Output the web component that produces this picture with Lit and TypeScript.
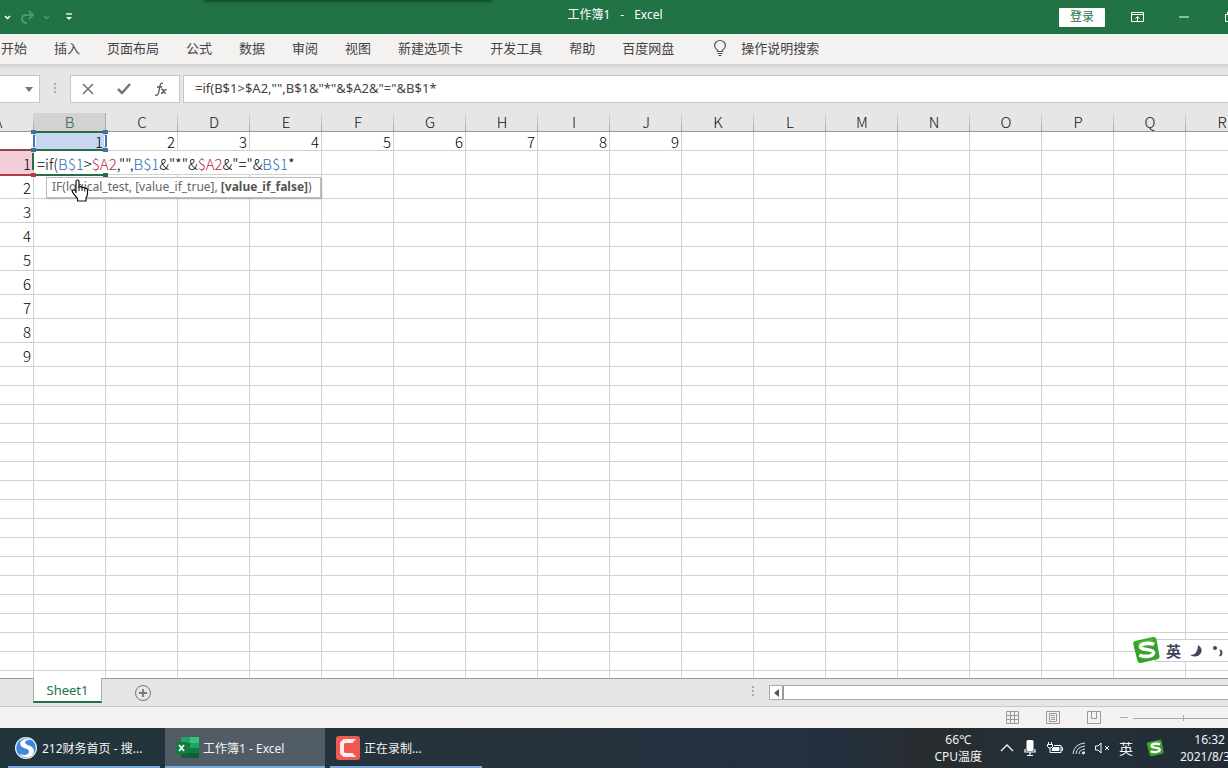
import { LitElement, html, css, svg } from "lit";
import { customElement } from "lit/decorators.js";
import { classMap } from "lit/directives/class-map.js";

const TABS = ["开始", "插入", "页面布局", "公式", "数据", "审阅", "视图", "新建选项卡", "开发工具", "帮助", "百度网盘"];
const COLUMNS = [..."ABCDEFGHIJKLMNOPQR"];
const ROW_COUNT = 27;

const FORMULA: Array<[string, string]> = [
  ["=if(", ""],
  ["B$1", "blue"],
  [">", ""],
  ["$A2", "red"],
  [',"",', ""],
  ["B$1", "blue"],
  ['&"*"&', ""],
  ["$A2", "red"],
  ['&"="&', ""],
  ["B$1", "blue"],
  ["*", ""],
];

const sogouMark = svg`
  <path d="M3 5 21 1q3-.4 3.500 2.200L27.500 20q.4 2.600-2 3.200L9 27q-3 .5-3.600-2.200L1.200 8q-.4-2.400 1.800-3z" fill="#37a32b"/>
  <path d="M5 6 20 3l3 1-17 5z" fill="#6cc34e" opacity=".6"/>
  <path d="M22 8.500c-4-2.200-14-1-13.500 2.500.4 3.500 12.500 1.500 13 5.500.4 4-9.500 5-14 2.500" fill="none" stroke="#fff" stroke-width="3.600"/>`;

@customElement("excel-grid")
class ExcelGrid extends LitElement {
  static styles = css`
    :host { display: block; overflow: hidden; background: #fff; position: relative; }
    .grid {
      margin-left: -38px; border-collapse: separate; border-spacing: 0;
      table-layout: fixed; width: 1296px;
      font: 300 15px/17px "Noto Sans CJK SC", sans-serif; color: #000;
    }
    th, td { box-sizing: border-box; padding: 0; }
    th {
      height: 19px; font-weight: 300; line-height: 18px; color: #111;
      background: linear-gradient(#e6e6e6, #e6e6e6) left / 71px 100% no-repeat, linear-gradient(#dcdcdc, #a2a2a2);
      border-bottom: 1px solid #999;
    }
    th.active { background: #d2d2d2; color: #2f6147; border-right: 1px solid #aaa; }
    td {
      height: 19px; border-right: 1px solid #d0d0d2; border-bottom: 1px solid #d0d0d2;
      text-align: right; padding: 1px 2px 0 0; vertical-align: middle;
    }
    .tall td { height: 24px; }
    td.ref-blue { background: #c7d7ef; }
    td.ref-red { background: #f4ced7; }
    td.editing { text-align: left; padding: 1px 0 0 3px; white-space: pre; }
    .blue { color: #2f6db5; }
    .red { color: #b52a3c; }
    .marks { position: absolute; left: 0; top: 15px; width: 112px; height: 52px; pointer-events: none; }
    .tip {
      position: absolute; left: 46px; top: 64px; height: 19px; padding: 0 8px 0 5px;
      border: 1px solid #bcbcbc; background: #fff; box-shadow: 1px 1px 2px #0003;
      font: 12px/17px "Noto Sans", sans-serif; color: #666; white-space: nowrap;
    }
    .tip b { color: #555; }
    .hand { position: absolute; left: 71px; top: 66px; width: 18px; height: 23px; }
  `;

  cell(row: number, col: number) {
    if (row === 1 && col === 1) {
      return html`<td class="editing" colspan="4">${FORMULA.map(([t, c]) => html`<span class=${c}>${t}</span>`)}</td>`;
    }
    if (row === 1 && col > 1 && col < 5) return null;
    let value = "";
    if (row === 0 && col > 0 && col < 10) value = String(col);
    if (col === 0 && row > 0 && row < 10) value = String(row);
    const cls = { "ref-blue": row === 0 && col === 1, "ref-red": row === 1 && col === 0 };
    return html`<td class=${classMap(cls)}>${value}</td>`;
  }

  render() {
    return html`
      <table class="grid">
        <thead>
          <tr>${COLUMNS.map((c) => html`<th scope="col" class=${classMap({ active: c === "B" })}>${c}</th>`)}</tr>
        </thead>
        <tbody>
          ${Array.from({ length: ROW_COUNT }, (_, r) => html`
            <tr class=${classMap({ tall: r > 0 && r < 10 })}>${COLUMNS.map((_c, i) => this.cell(r, i))}</tr>`)}
        </tbody>
      </table>
      <svg class="marks" viewBox="0 0 112 52" aria-hidden="true">
        <path d="M36 4h68M36 22h68" stroke="#2a6b4a" stroke-width="2"/>
        <path d="M34 8v10M106 8v10" stroke="#fff" stroke-width="4"/>
        <path d="M34 7v12M106 7v12" stroke="#4a77ab" stroke-width="2"/>
        <path d="M0 22h31" stroke="#8f4654" stroke-width="2"/>
        <path d="M0 47h31" stroke="#b53a4a" stroke-width="2"/>
        <path d="M33 25v17" stroke="#2a6b4a" stroke-width="2"/>
        <path d="M36 47h67" stroke="#2a6b4a" stroke-width="2"/>
        <path d="M31 2h5v4h-5zM103 2h5v4h-5zM31 20h5v4h-5zM103 20h5v4h-5z" fill="#41729f"/>
        <path d="M31 45h5v4h-5z" fill="#b53a4a"/>
        <path d="M103 45h5v4h-5z" fill="#2a6b4a"/>
      </svg>
      <div class="tip" role="tooltip">IF(logical_test, [value_if_true], <b>[value_if_false]</b>)</div>
      <svg class="hand" viewBox="0 0 18 23" aria-hidden="true">
        <path d="M5 14V2.500Q5 1 6.500 1T8 2.500V8q2-1 3 .6 2-.8 2.800.8 2.700-.6 2.700 2V15q0 2-1.500 4v3H6.500v-2.500L2 14q-1.400-2 0-3 1.500-.6 3 1.500z" fill="#fff" stroke="#111" stroke-width="1.200"/>
        <path d="M8 8v4M11 9v3M13.800 10v2.500" stroke="#111"/>
      </svg>`;
  }
}

@customElement("windows-taskbar")
class WindowsTaskbar extends LitElement {
  static styles = css`
    :host {
      display: flex; height: 40px; overflow: hidden; color: #f2f4f5;
      background: linear-gradient(90deg, #21343c 0, #26333c 40%, #223040 66%, #282c2e 76%, #22303a 86%, #232c35);
      font: 12px/17px "Noto Sans", "Noto Sans CJK SC", sans-serif;
    }
    button { font: inherit; color: inherit; background: none; border: 0; padding: 0; }
    .apps { display: flex; flex: 1; gap: 5px; }
    .app {
      box-sizing: border-box; width: 160px; display: flex; align-items: center; gap: 4px;
      padding: 0 10px; white-space: nowrap;
      background: linear-gradient(#7aa9dc, #7aa9dc) bottom / 100% 2px no-repeat;
    }
    .app.first { padding-left: 14px; background: linear-gradient(#7aa9dc, #7aa9dc) right bottom / 152px 2px no-repeat; }
    .app.active { background-color: #525c66; }
    .app.rec { width: 152px; padding: 0 6px; }
    .app svg { width: 24px; height: 24px; flex: none; }
    .tray { display: flex; align-items: center; flex: none; }
    .temp { text-align: center; margin-right: 18px; }
    .icons { display: flex; align-items: center; gap: 8px; margin-right: 11px; }
    .icons button { display: flex; }
    .lang { font-size: 14px; }
    .clock { width: 48px; white-space: nowrap; }
    .time { text-align: right; padding-right: 3px; }
  `;
  render() {
    return html`
      <div class="apps">
        <button class="app first">
          <svg viewBox="0 0 24 24" aria-hidden="true"><circle cx="12" cy="12" r="11" fill="#e8f0f8"/><circle cx="12" cy="12" r="9.800" fill="#3f87d8"/>
            <path d="M18 4.500C12 1 5 4 6.500 9c1.500 4 9 3 8.500 7-.4 3-6 4-10 1.500 4 6 15 4.500 15-2.500 0-6-8.500-5-9-8.500-.3-2 3.500-3 7-2z" fill="#fff"/></svg>
          <span>212财务首页 - 搜...</span>
        </button>
        <button class="app active">
          <svg viewBox="0 0 24 24" aria-hidden="true"><path d="M6 1h9v11H6z" fill="#21a366"/><path d="M15 1h9v6h-9z" fill="#33c481"/><path d="M15 7h9v5h-9z" fill="#21a366"/><path d="M6 7h9v10H6z" fill="#107c41"/><path d="M15 12h9v5h-9z" fill="#107c41"/><path d="M6 17h18v5H6z" fill="#185c37"/>
            <path d="M1 6h11v12H1z" fill="#107c41"/><path d="m4 9 5 6m0-6-5 6" stroke="#fff" stroke-width="1.700"/></svg>
          <span>工作簿1 - Excel</span>
        </button>
        <button class="app rec">
          <svg viewBox="0 0 24 24" aria-hidden="true"><rect width="24" height="24" rx="3" fill="#ee5a50"/><path d="M4 6.500 7.500 3H20l-3.500 4H9L8 8v8l1 1h7.500l3.500 4H7.500L4 17.500z" fill="#fdeceb"/></svg>
          <span>正在录制...</span>
        </button>
      </div>
      <div class="tray">
        <div class="temp">66℃<br>CPU温度</div>
        <div class="icons">
          <button aria-label="显示隐藏的图标"><svg width="14" height="16" fill="none" stroke="#f2f4f5" stroke-width="1.300"><path d="m1 11 6-6 6 6"/></svg></button>
          <button aria-label="麦克风"><svg width="16" height="18" viewBox="0 0 16 18"><rect x="4.500" y="1" width="7" height="11" rx="1.500" fill="#fff"/><path d="M3 10v3h10v-3M8 13v3M5 16.500h6" fill="none" stroke="#fff" stroke-width="1.200"/></svg></button>
          <button aria-label="电源"><svg width="18" height="16" viewBox="0 0 18 16" fill="none" stroke="#fff"><path d="M2.500 2v2M5.500 2v2M1.500 4.500h5v2l-1.500 1.500H3L1.500 6.500zM4 8v4.500h11v-7H8M15.500 7.500h1v3h-1"/><path d="M7 7.500h6v3H6z" fill="#fff"/></svg></button>
          <button aria-label="网络"><svg width="14" height="16" viewBox="0 0 14 16" fill="none" stroke="#dfe3e6"><path d="M1 14Q2 4 13 3M4 14q.5-7 9-8M7 14q0-4 6-5M10 14q0-2 3-2"/><circle cx="11.500" cy="13" r="1" fill="#fff"/></svg></button>
          <button aria-label="音量"><svg width="17" height="16" viewBox="0 0 17 16" fill="none" stroke="#fff"><path d="M1.500 6v4H4l3 3V3L4 6zM11 6l4 4m0-4-4 4"/></svg></button>
          <button class="lang" aria-label="输入法">英</button>
          <button aria-label="搜狗输入法"><svg width="28" height="18" viewBox="-8 0 44 28">${sogouMark}</svg></button>
        </div>
        <div class="clock"><div class="time">16:32</div><div>2021/8/3</div></div>
      </div>`;
  }
}

@customElement("app-root")
class AppRoot extends LitElement {
  static styles = css`
    :host {
      display: flex; flex-direction: column; height: 100vh; overflow: hidden; position: relative;
      font: 13px/18px "Noto Sans", "Noto Sans CJK SC", sans-serif; color: #444; background: #e6e6e6;
    }
    button, input { font: inherit; color: inherit; border: 0; padding: 0; background: none; }
    button { display: flex; align-items: center; justify-content: center; }
    input { outline: 0; min-width: 0; }
    .title {
      height: 34px; background: #217346; color: #fff; display: grid; grid-template-columns: 1fr auto 1fr;
      align-items: center; position: relative; overflow: hidden; font-size: 12px; flex: none;
    }
    .title::before {
      content: ""; position: absolute; left: 205px; top: -4px; width: 286px; height: 4px;
      box-shadow: 0 0 4px 1px #0a3a1e;
    }
    .quick { display: flex; align-items: center; gap: 7px; padding-left: 3px; }
    .name { display: flex; gap: 10px; padding: 0 0 4px 2px; }
    .window { display: flex; align-items: center; justify-content: flex-end; }
    .login { width: 46px; height: 19px; background: #fff; color: #217346; border-radius: 1px; margin-right: 25px; }
    .window svg { display: block; }
    .min { margin-right: 36px; margin-left: 34px; }
    .ribbon {
      box-sizing: border-box; height: 30px; flex: none; display: flex; align-items: center; gap: 27px; padding: 0 0 2px 1px;
      background: #f4f1f1; white-space: nowrap;
    }
    .ribbon button { height: 28px; }
    .search { gap: 14px; margin-left: 12px; }
    .bar {
      height: 27px; flex: none; display: flex; gap: 3px; padding: 11px 0; 
      background: linear-gradient(#cfcfcf, #e6e6e6 5px);
    }
    .box { box-sizing: border-box; height: 28px; background: #fff; border: 1px solid #c6c6c6; display: flex; align-items: center; }
    .namebox { width: 40px; border-left: 0; justify-content: flex-end; padding-right: 6px; }
    .namebox input { width: 20px; }
    .grip { width: 24px; display: flex; justify-content: center; align-items: center; height: 28px; }
    .fx { width: 110px; justify-content: space-around; }
    .formula { flex: 1; border-right: 0; padding: 0 0 2px 11px; }
    .formula input { flex: 1; color: #444; }
    excel-grid { flex: 1; min-height: 0; }
    .sheets {
      height: 27px; flex: none; display: flex; align-items: center; border-top: 1px solid #999;
      border-bottom: 1px solid #c9c7c7; padding-left: 33px;
    }
    .sheet {
      box-sizing: border-box; width: 69px; height: 25px; align-self: flex-start; margin-top: -1px; background: #fff;
      border: solid #aaa; border-width: 0 1px 2px; border-bottom-color: #217346; color: #217346;
    }
    .add { margin-left: 32px; }
    .add svg { display: block; }
    .scroll { flex: 0 0 459px; margin-left: 14px; height: 15px; display: flex; box-sizing: border-box; border: 1px solid #aaa; border-right: 0; background: #fff; }
    .scroll button { width: 14px; border-right: 2px solid #999; }
    .dots { margin-left: auto; }
    .status { height: 21px; flex: none; background: #f4f1f1; display: flex; justify-content: flex-end; align-items: center; }
    .views { display: flex; gap: 27px; margin-right: 18px; }
    windows-taskbar { flex: none; }
    .ime { position: absolute; right: 0; bottom: 103px; width: 96px; height: 29px; }
    .ime-box {
      position: absolute; right: 0; top: 3px; width: 72px; height: 21px; background: #fff; border: 1px solid #c9cbe0;
      border-right: 0; display: flex; align-items: center; gap: 8px; color: #3e4656; overflow: hidden;
    }
    .ime-box b { margin-left: 10px; font-size: 15px; }
    .ime-logo { position: absolute; left: 0; top: 0; }
  `;

  render() {
    const grip = html`<svg width="3" height="12" fill="#aaa" aria-hidden="true"><path d="M0 0h2v2H0zM0 4h2v2H0zM0 8h2v2H0z"/></svg>`;
    return html`
      <header class="title">
        <div class="quick">
          <button aria-label="撤消选项"><svg width="9" height="8" fill="none" stroke="#fff" stroke-width="1.500"><path d="m2 3 2.500 2.500L7 3"/></svg></button>
          <button aria-label="恢复"><svg width="17" height="16" fill="none" stroke="#4c9a6c" stroke-width="2"><path d="M10 2l4 4-4 4M14 6H7Q3 6 3 10t5 4"/></svg></button>
          <button aria-label="恢复选项"><svg width="8" height="8" fill="none" stroke="#4c9a6c" stroke-width="1.300"><path d="m1 3 2.500 2.500L6 3"/></svg></button>
          <button aria-label="自定义快速访问工具栏"><svg width="24" height="10" viewBox="-8 0 24 10"><path d="M0 2h6" stroke="#fff" stroke-width="1.300"/><path d="M0 5h6L3 8z" fill="#fff"/></svg></button>
        </div>
        <div class="name"><span>工作簿1</span><span>-</span><span>Excel</span></div>
        <div class="window">
          <button class="login">登录</button>
          <button aria-label="功能区显示选项"><svg width="15" height="12" fill="none" stroke="#fff"><path d="M1.500 1.500h12v9h-12zM1.500 3.500h12M7.500 10V5.500M5.500 7.500l2-2 2 2"/></svg></button>
          <button class="min" aria-label="最小化"><svg width="10" height="2"><path d="M0 1h10" stroke="#fff"/></svg></button>
          <button aria-label="还原"><svg width="3" height="12" fill="none" stroke="#fff"><path d="M3 3.500H.5v7H3M2.500 3V1"/></svg></button>
        </div>
      </header>
      <nav class="ribbon" aria-label="功能区">
        ${TABS.map((t) => html`<button>${t}</button>`)}
        <button class="search"><svg width="14" height="18" fill="none" stroke="#555" stroke-width="1.200"><path d="M4.500 12.500V11Q1.500 9 1.500 6.500a5.500 5 0 0 1 11 0Q12.500 9 9.500 11v1.500zM4.500 14.500h5M5.500 16.500h3"/></svg>操作说明搜索</button>
      </nav>
      <div class="bar">
        <div class="box namebox"><input aria-label="名称框"><button aria-label="名称列表"><svg width="8" height="5"><path d="M0 0h8L4 5z" fill="#777"/></svg></button></div>
        <div class="grip">${grip}</div>
        <div class="box fx">
          <button aria-label="取消"><svg width="12" height="12" stroke="#777" stroke-width="1.700"><path d="m1 1 10 10M11 1 1 11"/></svg></button>
          <button aria-label="输入"><svg width="14" height="12" fill="none" stroke="#777" stroke-width="2.500"><path d="m1 6 4 4 8-9"/></svg></button>
          <button aria-label="插入函数"><svg width="14" height="15" fill="none" stroke="#555" stroke-width="1.300"><path d="M9 1.500Q6.500 0 6 4L4.500 11Q4 14 1 13M3 5h5M7 7.500q2-1 2.500 1.500t2.500 2M12.500 7.500q-1.500 0-3 2T7 11.500"/></svg></button>
        </div>
        <div class="box formula"><input aria-label="编辑栏" .value=${FORMULA.map(([t]) => t).join("")}></div>
      </div>
      <excel-grid></excel-grid>
      <div class="sheets">
        <button class="sheet">Sheet1</button>
        <button class="add" aria-label="新工作表"><svg width="18" height="18" fill="none" stroke="#777"><circle cx="9" cy="9" r="7.500"/><path d="M9 5v8M5 9h8" stroke-width="1.800"/></svg></button>
        <span class="dots">${grip}</span>
        <div class="scroll"><button aria-label="向左滚动"><svg width="5" height="8"><path d="M5 0v8L0 4z" fill="#555"/></svg></button></div>
      </div>
      <div class="status">
        <div class="views">
          <button aria-label="普通"><svg width="13" height="13" fill="none" stroke="#999"><path d="M.5.5h12v12H.5zM4.500.5v12M8.500.5v12M.5 4.500h12M.5 8.500h12"/></svg></button>
          <button aria-label="页面布局"><svg width="14" height="13" fill="none" stroke="#999"><path d="M.5.5h13v12H.5zM3.500 2.500h7v8h-7zM5 4.500h4M5 6.500h4M5 8.500h4"/></svg></button>
          <button aria-label="分页预览"><svg width="14" height="13" fill="none" stroke="#999"><path d="M.5.5h13v12H.5zM4.500.5v7h5v-7M9.500 7.500V.5"/></svg></button>
        </div>
        <svg width="109" height="13" stroke="#aaa" aria-hidden="true"><path d="M1 6.500h8M14 7.500h95M64.500 4v6"/></svg>
      </div>
      <windows-taskbar></windows-taskbar>
      <div class="ime">
        <div class="ime-box"><b>英</b>
          <svg width="14" height="14"><path d="M9 1q5 3 3 8-4 6-11 2 8 0 8-10z" fill="#3e4656"/></svg>
          <svg width="14" height="14"><circle cx="4" cy="4" r="2" fill="#3e4656"/><path d="M9 6q3 2 0 6" fill="none" stroke="#3e4656" stroke-width="2"/></svg>
        </div>
        <svg class="ime-logo" width="29" height="28">${sogouMark}</svg>
      </div>`;
  }
}
